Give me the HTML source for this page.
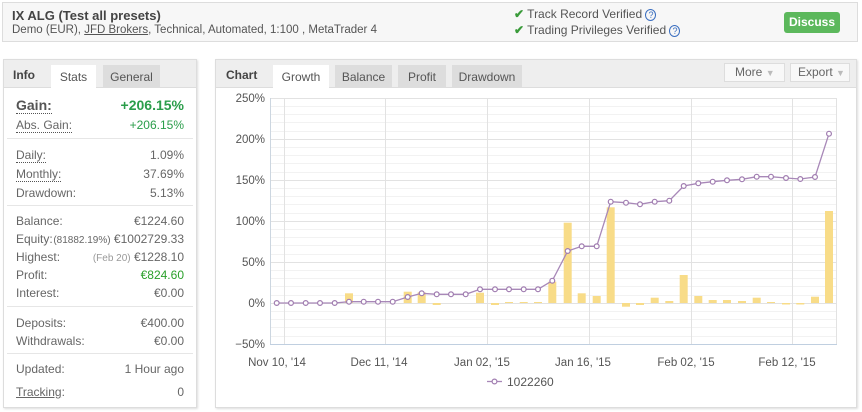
<!DOCTYPE html>
<html><head><meta charset="utf-8"><style>
*{margin:0;padding:0;box-sizing:border-box}
body{width:862px;height:412px;background:#fff;font-family:"Liberation Sans",sans-serif;font-size:12px;color:#555;position:relative;overflow:hidden}
.a{position:absolute;white-space:nowrap}
.box{position:absolute;border:1px solid #ddd;background:#fff;box-shadow:1px 1px 2px #ddd}
.row{position:absolute;left:12px;right:12px;height:16px;font-size:12px;color:#666}
.row .r{position:absolute;right:0;top:0}
.dot{border-bottom:1px dotted #555}
.sep{position:absolute;left:3px;right:3px;height:1px;background:#e6e6e6}
.tab{position:absolute;top:5px;height:23px;background:#ddd;color:#555;font-size:12px;text-align:center;line-height:24px}
.btn{position:absolute;top:63px;height:19px;border:1px solid #ddd;background:#f8f8f8;color:#666;font-size:12px;line-height:17px;padding-left:10px}
</style></head><body>
<div class="box" style="left:2px;top:2px;width:856px;height:40px;background:#f7f7f7;box-shadow:none"></div>
<div class="a" style="left:12px;top:8px;font-size:13px;font-weight:bold;color:#444">IX ALG (Test all presets)</div>
<div class="a" style="left:12px;top:24px;font-size:11.5px;color:#555">Demo (EUR), <u>JFD Brokers</u>, Technical, Automated, 1:100 , MetaTrader 4</div>
<div class="a" style="left:514px;top:7px;font-size:12px;color:#555"><span style="color:#3a9b3a;font-weight:bold">✔</span> Track Record Verified <span style="color:#3b6fc0;font-size:9px;border:1px solid #3b6fc0;border-radius:50%;padding:0 2px">?</span></div>
<div class="a" style="left:514px;top:23px;font-size:12px;color:#555"><span style="color:#3a9b3a;font-weight:bold">✔</span> Trading Privileges Verified <span style="color:#3b6fc0;font-size:9px;border:1px solid #3b6fc0;border-radius:50%;padding:0 2px">?</span></div>
<div class="a" style="left:784px;top:12px;width:56px;height:21px;background:#5cb85c;border-radius:3px;color:#fff;font-weight:bold;font-size:12px;text-align:center;line-height:21px">Discuss</div>

<!-- left panel -->
<div class="box" style="left:3px;top:59px;width:194px;height:349px">
<div style="position:absolute;left:0;top:0;right:0;height:28px;background:#eee;border-bottom:1px solid #ddd"></div>
<div class="a" style="left:9px;top:8px;font-weight:bold;font-size:12px;color:#444">Info</div>
<div class="tab" style="left:47px;width:45px;background:#fff;height:24px">Stats</div>
<div class="tab" style="left:99px;width:57px">General</div>
<div class="row" style="top:37px;font-size:14px;font-weight:bold;color:#555"><span class="dot">Gain:</span><span class="r" style="color:#2a9d4a">+206.15%</span></div>
<div class="row" style="top:58px"><span class="dot">Abs. Gain:</span><span class="r" style="color:#2a9d4a">+206.15%</span></div>
<div class="sep" style="top:78px"></div>
<div class="row" style="top:88px"><span class="dot">Daily:</span><span class="r">1.09%</span></div>
<div class="row" style="top:107px"><span class="dot">Monthly:</span><span class="r">37.69%</span></div>
<div class="row" style="top:126px">Drawdown:<span class="r">5.13%</span></div>
<div class="sep" style="top:145px"></div>
<div class="row" style="top:154px">Balance:<span class="r">€1224.60</span></div>
<div class="row" style="top:172px">Equity:<span class="r"><span style="font-size:10px">(81882.19%)</span> €1002729.33</span></div>
<div class="row" style="top:190px">Highest:<span class="r"><span style="font-size:10px;color:#999">(Feb 20)</span> €1228.10</span></div>
<div class="row" style="top:208px">Profit:<span class="r" style="color:#2aa02a">€824.60</span></div>
<div class="row" style="top:226px">Interest:<span class="r">€0.00</span></div>
<div class="sep" style="top:246px"></div>
<div class="row" style="top:256px">Deposits:<span class="r">€400.00</span></div>
<div class="row" style="top:274px">Withdrawals:<span class="r">€0.00</span></div>
<div class="sep" style="top:293px"></div>
<div class="row" style="top:302px">Updated:<span class="r">1 Hour ago</span></div>
<div class="row" style="top:325px"><u>Tracking</u>:<span class="r">0</span></div>
</div>

<!-- right panel -->
<div class="box" style="left:215px;top:59px;width:642px;height:349px">
<div style="position:absolute;left:0;top:0;right:0;height:28px;background:#eee;border-bottom:1px solid #ddd"></div>
<div class="a" style="left:10px;top:8px;font-weight:bold;font-size:12px;color:#444">Chart</div>
<div class="tab" style="left:57px;width:56px;background:#fff;height:24px">Growth</div>
<div class="tab" style="left:119px;width:57px">Balance</div>
<div class="tab" style="left:182px;width:48px">Profit</div>
<div class="tab" style="left:236px;width:70px">Drawdown</div>
</div>
<div class="btn" style="left:724px;width:61px">More <span style="color:#bbb;font-size:9px">▼</span></div>
<div class="btn" style="left:790px;width:60px;padding-left:7px">Export <span style="color:#bbb;font-size:9px">▼</span></div>

<svg class="a" style="left:0;top:0" width="862" height="412" font-family="Liberation Sans, sans-serif" font-size="11" fill="#555">
<g stroke="#f2f2f2" stroke-width="1">
<line x1="270" x2="837" y1="106.5" y2="106.5"/><line x1="270" x2="837" y1="114.5" y2="114.5"/><line x1="270" x2="837" y1="122.5" y2="122.5"/><line x1="270" x2="837" y1="131.5" y2="131.5"/>
<line x1="270" x2="837" y1="147.5" y2="147.5"/><line x1="270" x2="837" y1="155.5" y2="155.5"/><line x1="270" x2="837" y1="163.5" y2="163.5"/><line x1="270" x2="837" y1="172.5" y2="172.5"/>
<line x1="270" x2="837" y1="188.5" y2="188.5"/><line x1="270" x2="837" y1="196.5" y2="196.5"/><line x1="270" x2="837" y1="204.5" y2="204.5"/><line x1="270" x2="837" y1="213.5" y2="213.5"/>
<line x1="270" x2="837" y1="229.5" y2="229.5"/><line x1="270" x2="837" y1="237.5" y2="237.5"/><line x1="270" x2="837" y1="245.5" y2="245.5"/><line x1="270" x2="837" y1="254.5" y2="254.5"/>
<line x1="270" x2="837" y1="270.5" y2="270.5"/><line x1="270" x2="837" y1="278.5" y2="278.5"/><line x1="270" x2="837" y1="286.5" y2="286.5"/><line x1="270" x2="837" y1="295.5" y2="295.5"/>
<line x1="270" x2="837" y1="311.5" y2="311.5"/><line x1="270" x2="837" y1="319.5" y2="319.5"/><line x1="270" x2="837" y1="327.5" y2="327.5"/><line x1="270" x2="837" y1="336.5" y2="336.5"/>
</g>
<g stroke="#e2e2e2" stroke-width="1">
<line x1="270" x2="837" y1="98.5" y2="98.5"/><line x1="270" x2="837" y1="139.5" y2="139.5"/><line x1="270" x2="837" y1="180.5" y2="180.5"/><line x1="270" x2="837" y1="221.5" y2="221.5"/><line x1="270" x2="837" y1="262.5" y2="262.5"/><line x1="270" x2="837" y1="303.5" y2="303.5"/>
<line x1="284.5" x2="284.5" y1="98" y2="344"/><line x1="385.5" x2="385.5" y1="98" y2="344"/><line x1="487.5" x2="487.5" y1="98" y2="344"/><line x1="589.5" x2="589.5" y1="98" y2="344"/><line x1="691.5" x2="691.5" y1="98" y2="344"/><line x1="792.5" x2="792.5" y1="98" y2="344"/><line x1="836.5" x2="836.5" y1="98" y2="344"/>
</g>
<line x1="270.5" x2="270.5" y1="98" y2="344" stroke="#ccd6e0"/>
<line x1="270" x2="837" y1="344.5" y2="344.5" stroke="#c0cfe0"/>
<g text-anchor="end" font-size="11.5">
<text x="265" y="102">250%</text><text x="265" y="143">200%</text><text x="265" y="184">150%</text><text x="265" y="225">100%</text><text x="265" y="266">50%</text><text x="265" y="307">0%</text><text x="265" y="348">−50%</text>
</g>
<g text-anchor="middle" font-size="11.5">
<text x="277" y="366">Nov 10, '14</text><text x="379" y="366">Dec 11, '14</text><text x="482" y="366">Jan 02, '15</text><text x="583" y="366">Jan 16, '15</text><text x="686" y="366">Feb 02, '15</text><text x="787" y="366">Feb 12, '15</text>
</g>
<g fill="#f8dc88">
<rect x="345" y="293.3" width="8" height="9.7"/><rect x="403.7" y="291.7" width="8" height="11.3"/><rect x="417.7" y="292.3" width="8" height="10.7"/><rect x="432.7" y="303" width="8" height="2"/><rect x="476" y="292.7" width="8" height="10.3"/><rect x="491" y="303" width="8" height="2"/><rect x="505" y="302" width="8" height="1"/><rect x="519.7" y="302" width="8" height="1"/><rect x="534" y="302" width="8" height="1"/><rect x="548.3" y="281.7" width="8" height="21.3"/><rect x="563.7" y="222.7" width="8" height="80.3"/><rect x="577.7" y="293.3" width="8" height="9.7"/><rect x="592.7" y="296" width="8" height="7"/><rect x="606.7" y="207.3" width="8" height="95.7"/><rect x="622" y="303" width="8" height="3.7"/><rect x="636" y="303" width="8" height="2"/><rect x="650.7" y="297.7" width="8" height="5.3"/><rect x="665.3" y="301" width="8" height="2"/><rect x="679.7" y="275" width="8" height="28"/><rect x="694.3" y="296" width="8" height="7"/><rect x="708.7" y="300" width="8" height="3"/><rect x="723" y="300" width="8" height="3"/><rect x="738" y="301" width="8" height="2"/><rect x="752.7" y="297.7" width="8" height="5.3"/><rect x="767" y="302" width="8" height="1"/><rect x="782" y="303" width="8" height="1.5"/><rect x="796.3" y="303" width="8" height="1.5"/><rect x="811" y="296.7" width="8" height="6.3"/><rect x="825" y="211" width="8" height="92"/>
</g>
<polyline fill="none" stroke="#a888b8" stroke-width="1.3" points="276.7,303 291,303 305.7,303 320,303 334.7,303 349,301.7 363.7,301.7 378,301.7 392.7,301.7 407.7,297 421.7,293.3 436.7,294.3 451,294.3 465.7,294.3 480,289.3 495,289.3 509,289.3 523.7,289.3 538,289.3 552.3,280.7 567.7,251 581.7,246.3 596.7,246.3 610.7,201.7 626,202.7 640,204.3 654.7,201.7 669.3,200.7 683.7,186 698.3,183.3 712.7,181.7 727,180.3 742,179.3 756.7,176.7 771,176.7 786,178 800.3,179 815,177 829,133.7"/>
<g fill="#fff" stroke="#a07cb0" stroke-width="1.2">
<circle cx="276.7" cy="303" r="2.4"/><circle cx="291" cy="303" r="2.4"/><circle cx="305.7" cy="303" r="2.4"/><circle cx="320" cy="303" r="2.4"/><circle cx="334.7" cy="303" r="2.4"/><circle cx="349" cy="301.7" r="2.4"/><circle cx="363.7" cy="301.7" r="2.4"/><circle cx="378" cy="301.7" r="2.4"/><circle cx="392.7" cy="301.7" r="2.4"/><circle cx="407.7" cy="297" r="2.4"/><circle cx="421.7" cy="293.3" r="2.4"/><circle cx="436.7" cy="294.3" r="2.4"/><circle cx="451" cy="294.3" r="2.4"/><circle cx="465.7" cy="294.3" r="2.4"/><circle cx="480" cy="289.3" r="2.4"/><circle cx="495" cy="289.3" r="2.4"/><circle cx="509" cy="289.3" r="2.4"/><circle cx="523.7" cy="289.3" r="2.4"/><circle cx="538" cy="289.3" r="2.4"/><circle cx="552.3" cy="280.7" r="2.4"/><circle cx="567.7" cy="251" r="2.4"/><circle cx="581.7" cy="246.3" r="2.4"/><circle cx="596.7" cy="246.3" r="2.4"/><circle cx="610.7" cy="201.7" r="2.4"/><circle cx="626" cy="202.7" r="2.4"/><circle cx="640" cy="204.3" r="2.4"/><circle cx="654.7" cy="201.7" r="2.4"/><circle cx="669.3" cy="200.7" r="2.4"/><circle cx="683.7" cy="186" r="2.4"/><circle cx="698.3" cy="183.3" r="2.4"/><circle cx="712.7" cy="181.7" r="2.4"/><circle cx="727" cy="180.3" r="2.4"/><circle cx="742" cy="179.3" r="2.4"/><circle cx="756.7" cy="176.7" r="2.4"/><circle cx="771" cy="176.7" r="2.4"/><circle cx="786" cy="178" r="2.4"/><circle cx="800.3" cy="179" r="2.4"/><circle cx="815" cy="177" r="2.4"/><circle cx="829" cy="133.7" r="2.4"/>
</g>
<line x1="487" x2="502" y1="381.5" y2="381.5" stroke="#a888b8" stroke-width="1.3"/>
<circle cx="494.5" cy="381.5" r="2.4" fill="#fff" stroke="#a07cb0" stroke-width="1.2"/>
<text x="507" y="386" font-size="12">1022260</text>
</svg>
</body></html>
